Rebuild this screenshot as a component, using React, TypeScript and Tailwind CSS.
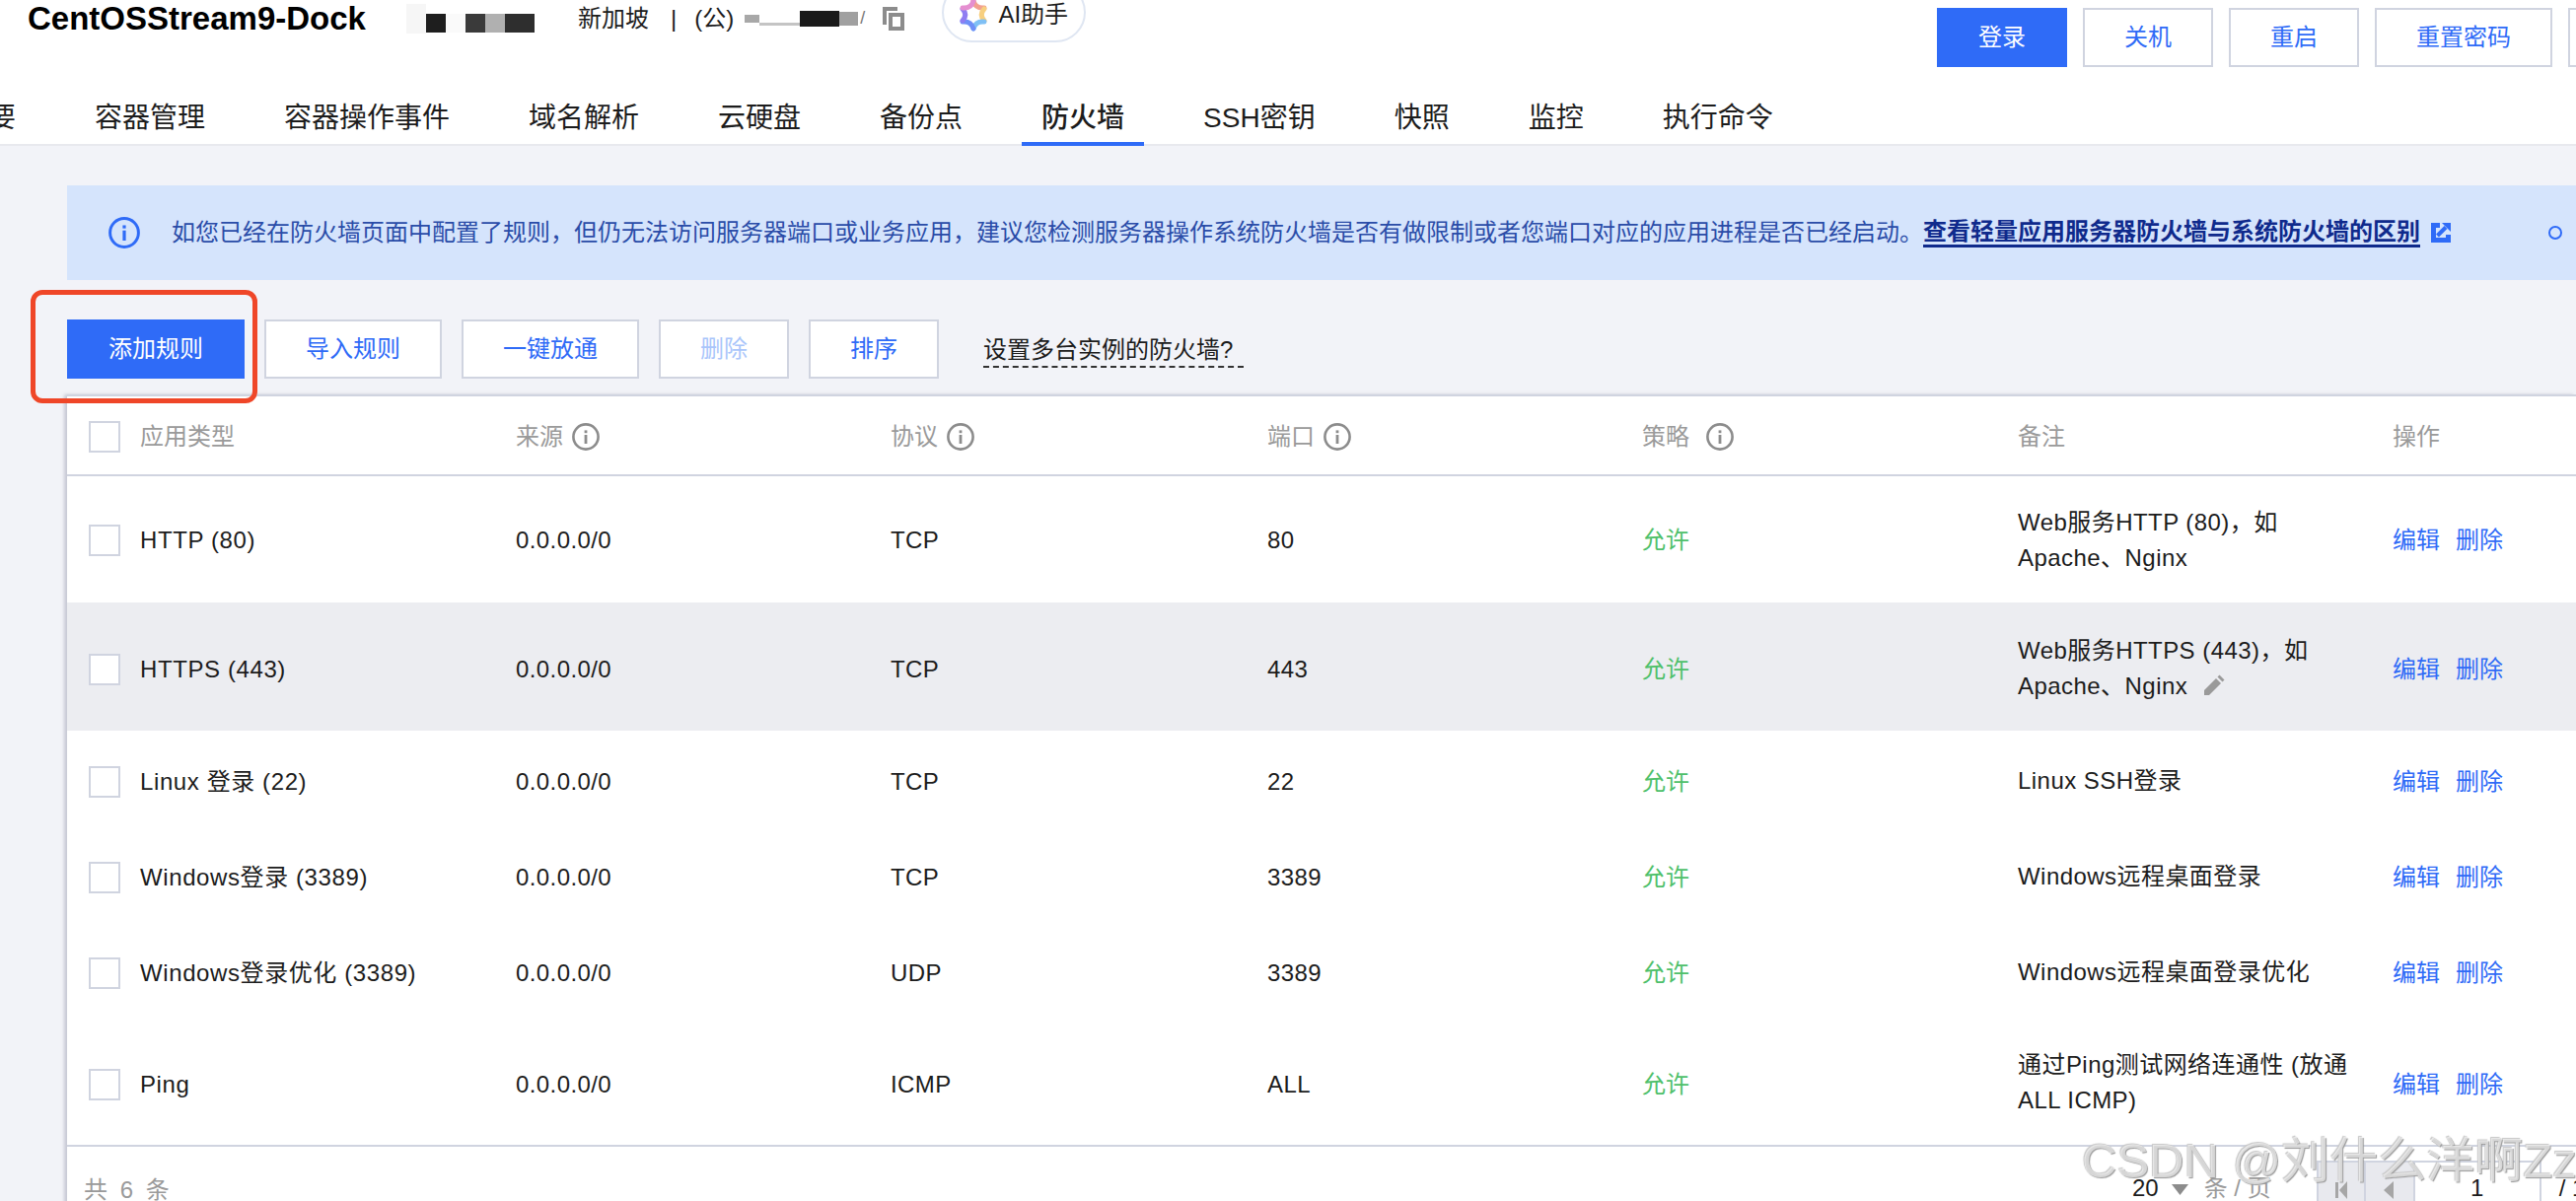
const SANS = "font-['Liberation_Sans','Noto_Sans_CJK_SC',sans-serif]";

const tabs = ["概要", "容器管理", "容器操作事件", "域名解析", "云硬盘", "备份点", "防火墙", "SSH密钥", "快照", "监控", "执行命令"];
const columns = [
  { label: "来源", info: true, w: "w-[380px]", gap: "gap-[9px]" },
  { label: "协议", info: true, w: "w-[382px]", gap: "gap-[9px]" },
  { label: "端口", info: true, w: "w-[380px]", gap: "gap-[9px]" },
  { label: "策略", info: true, w: "w-[381px]", gap: "gap-[17px]" },
  { label: "备注", info: false, w: "w-[380px]", gap: "gap-[9px]" },
];
const rows = [
  { name: "HTTP (80)", protocol: "TCP", port: "80", note: ["Web服务HTTP (80)，如", "Apache、Nginx"], h: "h-[128px] pt-[2px]", noteShift: "" },
  { name: "HTTPS (443)", protocol: "TCP", port: "443", note: ["Web服务HTTPS (443)，如", "Apache、Nginx"], h: "h-[130px] pt-[6px]", hover: true, noteShift: "-mt-[3px]" },
  { name: "Linux 登录 (22)", protocol: "TCP", port: "22", note: ["Linux SSH登录"], h: "h-[97px] pt-[6px]", noteShift: "-mt-[2px]" },
  { name: "Windows登录 (3389)", protocol: "TCP", port: "3389", note: ["Windows远程桌面登录"], h: "h-[97px] pt-[6px]", noteShift: "-mt-[2px]" },
  { name: "Windows登录优化 (3389)", protocol: "UDP", port: "3389", note: ["Windows远程桌面登录优化"], h: "h-[97px] pt-[6px]", noteShift: "-mt-[2px]" },
  { name: "Ping", protocol: "ICMP", port: "ALL", note: ["通过Ping测试网络连通性 (放通", "ALL ICMP)"], h: "h-[129px] pt-[6px]", noteShift: "-mt-[4px]" },
];

function InfoIcon({ size = 28, color = "#8c8c8c", stroke = 2.6 }: { size?: number; color?: string; stroke?: number }) {
  return (
    <svg width={size} height={size} viewBox="0 0 28 28" fill="none">
      <circle cx="14" cy="14" r="12.6" stroke={color} strokeWidth={stroke} />
      <rect x="12.6" y="12" width="2.8" height="9" fill={color} />
      <rect x="12.6" y="7.4" width="2.8" height="2.8" fill={color} />
    </svg>
  );
}

function Checkbox() {
  return <div className="w-[32px] h-[32px] shrink-0 border-2 border-[#d0d4e0] bg-white" />;
}

function OutlineButton({ label, className, text = "text-[#2f6bf7]" }: { label: string; className: string; text?: string }) {
  return (
    <button className={`h-[60px] border-2 border-[#d0d4e0] bg-white flex items-center justify-center text-[24px] ${text} ${className}`}>
      {label}
    </button>
  );
}

function AiStar() {
  return (
    <svg width="28" height="34" viewBox="0 0 28 34" fill="none">
      <path d="M14 3 Q16.5 11 25 10" stroke="#f2a090" strokeWidth="5" strokeLinecap="round" />
      <path d="M25 11 Q19.5 17 25 23" stroke="#f7cf7f" strokeWidth="5" strokeLinecap="round" />
      <path d="M25 24 Q16.5 23 14 31" stroke="#7fc0f5" strokeWidth="5" strokeLinecap="round" />
      <path d="M14 31 Q11.5 23 3 24" stroke="#6f8ff7" strokeWidth="5" strokeLinecap="round" />
      <path d="M3 23 Q8.5 17 3 11" stroke="#8f7df2" strokeWidth="5" strokeLinecap="round" />
      <path d="M3 10 Q11.5 11 14 3" stroke="#e58fd0" strokeWidth="5" strokeLinecap="round" />
    </svg>
  );
}

function CopyIcon() {
  return (
    <svg width="22" height="24" viewBox="0 0 22 24" fill="none">
      <path d="M15 2 H2 V18" stroke="#8c8c8c" strokeWidth="4" />
      <rect x="8" y="8" width="12" height="14" stroke="#8c8c8c" strokeWidth="4" />
    </svg>
  );
}

function PencilIcon() {
  return (
    <svg width="24" height="24" viewBox="0 0 24 24" fill="#9a9a9a">
      <path d="M3 16 L15 4 L20 9 L8 21 L3 21 Z" />
      <path d="M16.5 2.5 L18.5 0.5 L23.5 5.5 L21.5 7.5 Z" />
    </svg>
  );
}

function ExternalIcon() {
  return (
    <svg width="20" height="20" viewBox="0 0 20 20">
      <path d="M0 0 H9 V5 H5 V15 H15 V12 H20 V20 H0 Z" fill="#2f6bf7" />
      <path d="M11 0 H20 V9 Z" fill="#2f6bf7" />
      <path d="M6.5 13 L15 4.5" stroke="#2f6bf7" strokeWidth="4" fill="none" />
    </svg>
  );
}

function Triangle({ bar }: { bar?: boolean }) {
  return (
    <svg width="20" height="24" viewBox="0 0 20 24" fill="#a6a6a6">
      {bar && <rect x="4" y="4" width="3" height="16" />}
      <path d={bar ? "M16 3 V21 L8 12 Z" : "M14 3 V21 L4 12 Z"} />
    </svg>
  );
}

export default function App() {
  return (
    <div className={`relative h-[1218px] w-[2612px] overflow-hidden bg-[#f2f3f8] text-[#1c1c1c] ${SANS}`}>
      <header className="h-[148px] bg-white border-b-2 border-[#e8e9ee]">
        <div className="flex items-start justify-between h-[68px]">
          <div className="flex items-center h-[37px] pl-[28px]">
            <span className="text-[33px] font-bold text-black w-[384px] overflow-hidden whitespace-nowrap">CentOSStream9-Dock</span>
            <span className="w-[20px] h-[30px] bg-[#f6f6f6]" />
            <span className="w-[20px] h-[19px] mt-[10px] bg-[#1e1e1e]" />
            <span className="w-[20px] h-[19px] mt-[10px] bg-[#fafafa]" />
            <span className="w-[20px] h-[19px] mt-[10px] bg-[#3a3a3a]" />
            <span className="w-[20px] h-[19px] mt-[10px] bg-[#b0b0b0]" />
            <span className="w-[30px] h-[19px] mt-[10px] bg-[#2e2e2e]" />
            <span className="text-[24px] ml-[44px]">新加坡</span>
            <span className="text-[24px] ml-[22px]">|</span>
            <span className="text-[24px] ml-[18px]">(公)</span>
            <span className="w-[15px] h-[8px] bg-[#a8a8a8] ml-[11px]" />
            <span className="w-[41px] h-[3px] bg-[#c4c4c4] ml-[0px] mt-[12px]" />
            <span className="w-[40px] h-[16px] bg-[#1a1a1a]" />
            <span className="w-[19px] h-[14px] bg-[#a0a0a0]" />
            <span className="text-[18px] text-[#777] ml-[2px]">/</span>
            <span className="ml-[18px] flex"><CopyIcon /></span>
            <div className="ml-[38px] -mt-[13px] h-[61px] w-[146px] shrink-0 rounded-full border-2 border-[#dfe6f2] bg-white flex items-center justify-center gap-[11px] pt-[6px]">
              <AiStar />
              <span className="text-[24px] whitespace-nowrap">AI助手</span>
            </div>
          </div>
          <div className="flex gap-[16px] pt-[8px] -mr-[100px]">
            <button className="h-[60px] w-[132px] bg-[#2f6bf7] text-white text-[24px]">登录</button>
            <OutlineButton label="关机" className="w-[132px]" />
            <OutlineButton label="重启" className="w-[132px]" />
            <OutlineButton label="重置密码" className="w-[180px]" />
            <OutlineButton label="" className="w-[108px]" />
          </div>
        </div>
        <nav className="flex gap-[40px] mt-[20px] -ml-[60px] text-[28px] whitespace-nowrap">
          {tabs.map((t) => (
            <div
              key={t}
              className={`h-[60px] px-[20px] pt-[7px] flex items-center border-b-4 ${t === "防火墙" ? "border-[#2f6bf7] font-medium" : "border-transparent"}`}
            >
              {t}
            </div>
          ))}
        </nav>
      </header>

      <main className="pl-[68px] pt-[40px]">
        <div className="h-[96px] bg-[#d5e4fc] flex items-center pl-[42px] text-[24px] text-[#2a4ca8] whitespace-nowrap">
          <InfoIcon size={32} color="#2f6bf7" stroke={2.6} />
          <span className="ml-[32px]">如您已经在防火墙页面中配置了规则，但仍无法访问服务器端口或业务应用，建议您检测服务器操作系统防火墙是否有做限制或者您端口对应的应用进程是否已经启动。</span>
          <span className="leading-[26px] border-b-[3px] border-[#0f2a8c] text-[#0f2a8c] font-bold">查看轻量应用服务器防火墙与系统防火墙的区别</span>
          <span className="ml-[11px] flex"><ExternalIcon /></span>
          <span className="ml-[99px] w-[14px] h-[14px] rounded-full border-2 border-[#2f6bf7]" />
        </div>

        <div className="relative flex items-center gap-[20px] mt-[40px]">
          <button className="h-[60px] w-[180px] bg-[#2f6bf7] text-white text-[24px]">添加规则</button>
          <OutlineButton label="导入规则" className="w-[180px]" />
          <OutlineButton label="一键放通" className="w-[180px]" />
          <OutlineButton label="删除" className="w-[132px]" text="text-[#a9c5fb]" />
          <OutlineButton label="排序" className="w-[132px]" />
          <span className="ml-[25px] pr-[11px] text-[24px] leading-[32px] mt-[4px] border-b-2 border-dashed border-[#333] whitespace-nowrap">设置多台实例的防火墙?</span>
          <div className="absolute left-[-37px] top-[-30px] w-[230px] h-[115px] rounded-[12px] border-[5px] border-[#ef4628]" />
        </div>

        <div className="mt-[16px] bg-white shadow-[-3px_0_3px_rgba(120,125,150,0.35)]">
          <div className="h-[83px] pt-[2px] flex items-center border-y-2 border-[#d0d4e0] text-[24px] text-[#9a9a9a]">
            <div className="w-[455px] flex items-center pl-[22px] gap-[20px]">
              <Checkbox />
              <span>应用类型</span>
            </div>
            {columns.map((c) => (
              <div key={c.label} className={`${c.w} flex items-center ${c.gap}`}>
                <span>{c.label}</span>
                {c.info && <InfoIcon />}
              </div>
            ))}
            <div>操作</div>
          </div>
          {rows.map((r) => (
            <div key={r.name} className={`${r.h} flex items-center text-[24px] ${r.hover ? "bg-[#ecedf1]" : ""}`}>
              <div className="w-[455px] flex items-center pl-[22px] gap-[20px]">
                <Checkbox />
                <span className="tracking-[0.6px]">{r.name}</span>
              </div>
              <div className="w-[380px] tracking-[0.4px]">0.0.0.0/0</div>
              <div className="w-[382px] tracking-[0.4px]">{r.protocol}</div>
              <div className="w-[380px] tracking-[0.4px]">{r.port}</div>
              <div className="w-[381px] text-[#4ec06a]">允许</div>
              <div className={`w-[380px] leading-[36px] tracking-[0.45px] ${r.noteShift}`}>
                {r.note.map((line, i) => (
                  <div key={line} className="flex items-center gap-[14px] whitespace-nowrap">
                    {line}
                    {r.hover && i === 1 && <PencilIcon />}
                  </div>
                ))}
              </div>
              <div className="flex gap-[16px] text-[#2f6bf7]">
                <span>编辑</span>
                <span>删除</span>
              </div>
            </div>
          ))}
          <div className="relative h-[60px] border-t-2 border-[#d0d4e0] flex items-start text-[24px] pt-[28px] pl-[17px] text-[#9a9a9a]">
            <span className="[word-spacing:6px] leading-[32px]">共 6 条</span>
            <div className="absolute left-[2094px] top-[14px] w-[500px] flex items-start whitespace-nowrap text-[#1c1c1c]">
              <span className="leading-[32px] mt-[12px]">20</span>
              <svg className="ml-[13px] mt-[24px]" width="17" height="11" viewBox="0 0 17 11" fill="#8c8c8c"><path d="M0 0 H17 L8.5 11 Z" /></svg>
              <span className="ml-[16px] mt-[12px] leading-[32px] text-[#9a9a9a]">条 / 页</span>
              <div className="ml-[46px] w-[50px] h-[60px] bg-[#e8e9ee] border-2 border-[#d0d4e0] flex items-center justify-center"><Triangle bar /></div>
              <div className="w-[50px] h-[60px] bg-[#e8e9ee] border-y-2 border-r-2 border-[#d0d4e0] flex items-center justify-center"><Triangle /></div>
              <div className="w-[128px] h-[60px] border-y-2 border-r-2 border-[#d0d4e0] flex items-start justify-center pt-[10px] leading-[32px]">1</div>
              <span className="ml-[18px] mt-[12px] leading-[32px]">/ 1</span>
            </div>
          </div>
        </div>
      </main>
      <div className="absolute left-[2111px] top-[1146px] text-[49px] leading-[62px] whitespace-nowrap text-white/60 [text-shadow:1px_1px_1px_#9a9a9a,-1px_-1px_1px_#c8c8c8]">
        CSDN @刘什么洋啊Zz
      </div>
    </div>
  );
}
